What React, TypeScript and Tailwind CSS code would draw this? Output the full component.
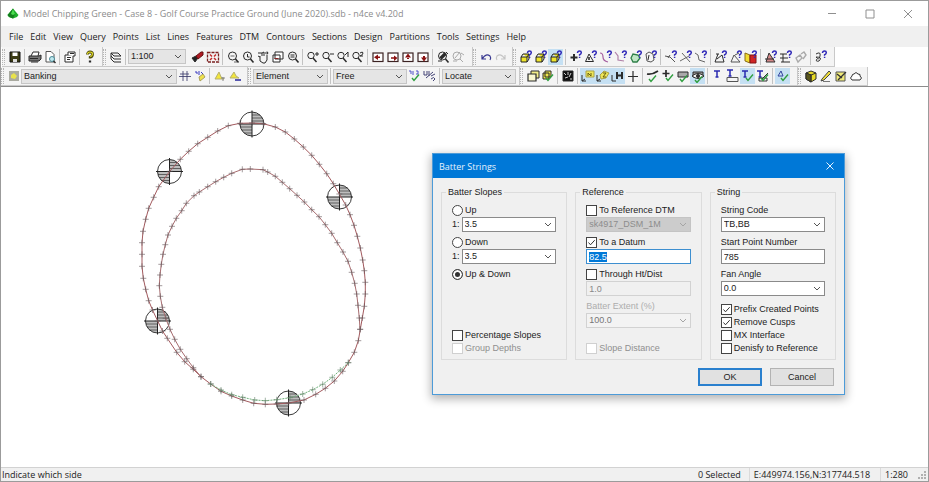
import { useEffect, useRef } from 'react';
import type { ReactNode } from 'react';
import { clsx } from 'clsx';

const MENU = [
  'File', 'Edit', 'View', 'Query', 'Points', 'List', 'Lines', 'Features', 'DTM', 'Contours',
  'Sections', 'Design', 'Partitions', 'Tools', 'Settings', 'Help',
];

type Point = [number, number];

const OUTER: Point[] = [
  [252, 123], [240, 123.3], [228.3, 125.7], [217.7, 131], [207.7, 137.3], [197.7, 143.7], [188.7, 151.3],
  [180.3, 159.3], [169.7, 171.3], [158.7, 186.7], [153.7, 197.3], [148.7, 208.3], [145.7, 219.3], [143, 231.3],
  [142, 242.7], [142, 254.3], [142, 266.3], [143.3, 278.3], [145.7, 289.3], [148.7, 300.7], [152.5, 310],
  [157.7, 321], [162.5, 331], [167.3, 338.3], [176.7, 352.3], [184.7, 361.7], [193.3, 369.3], [201, 376.7],
  [210.7, 384], [221, 391.3], [231.7, 396], [242.7, 400], [253.7, 403.3], [265.3, 404.3], [276.7, 404],
  [288.7, 403], [304, 400], [315.7, 394.3], [325.3, 388.3], [334.3, 381], [342.7, 371.3], [348.3, 362.7],
  [354.3, 352.3], [358.3, 340.7], [360.3, 329.3], [362.3, 318], [364.3, 306.3], [365.3, 294], [365.3, 282.3],
  [364.3, 270.7], [362.7, 260], [360.3, 248], [357.3, 236.3], [354, 225.3], [350, 214.7], [345.7, 205],
  [339.3, 194], [333.3, 183.7], [326.7, 173.7], [319.3, 164.3], [311.7, 155.3], [303.3, 147], [294.3, 139],
  [285.3, 132], [275.3, 127], [263.3, 123.7],
];

const INNER: Point[] = [
  [201, 376.7], [193.3, 367.7], [186.7, 358.7], [180.3, 349.3], [174.7, 339.3], [170, 329.3], [165.7, 318.3],
  [162.3, 307.3], [160.3, 296.3], [159.3, 285.7], [160, 275], [161.3, 264.3], [163, 254.3], [165.3, 244.7],
  [168, 235], [172, 226.3], [176.3, 218.3], [181.7, 210.7], [186.3, 203.3], [194, 195.7], [199.3, 192],
  [207.7, 186.7], [215.7, 181.7], [223.7, 177.3], [231.7, 173.3], [242.3, 169.3], [250.3, 169], [263, 169.7],
  [267.7, 172], [275.3, 176.3], [282.3, 182.3], [289.7, 188.7], [297, 195.3], [304.3, 202], [311.7, 209.7],
  [319, 216.7], [325.3, 224.7], [331.7, 233.3], [337.3, 242.7], [343, 252], [348, 261.3], [351.7, 272.3],
  [354.7, 283.3], [356.7, 294], [358, 305.3], [359.3, 318], [360, 329.3],
];

const FILL: Point[] = [
  [210.7, 384], [221, 390], [231.7, 394.7], [242.7, 397.3], [254.7, 400], [265.3, 400.7], [276.7, 399.7],
  [290, 397.7], [302.7, 394], [312.7, 389.7], [322.7, 384.3], [332.3, 377.3], [340.3, 370], [348.3, 362.7],
];

const STATIONS: Point[] = [[252, 124], [169.5, 171.5], [339.5, 197], [157.5, 321], [288.5, 403]];

const poly = (pts: Point[]) => pts.map((p) => p.join(',')).join(' ');
const ticks = (pts: Point[]) => pts.map(([x, y]) => `M${x - 3} ${y}h6M${x} ${y - 3}v6`).join('');

function Plan() {
  return (
    <svg viewBox="1 87 400 379" className="h-[379px] w-[400px] shrink-0" role="img" aria-label="Plan view">
      {STATIONS.map(([x, y]) => (
        <g key={x} transform={`translate(${x} ${y})`} stroke="#222" fill="none">
          <path d="M0 0V-12A12 12 0 0 1 12 0ZM0 0V12A12 12 0 0 1 -12 0Z" fill="#bdbdbd" stroke="none" />
          <circle r="12" strokeWidth=".9" />
          <path d="M-13.500 0H13.500M0 -13.500V13.500" strokeWidth="1" />
          <path d="M0 -3H11.500M0 -6H10.500M0 -9H8M0 3H-11.500M0 6H-10.500M0 9H-8" strokeWidth=".6" />
        </g>
      ))}
      <g fill="none" strokeWidth="1">
        <polygon points={poly(OUTER)} stroke="#a35a5e" />
        <polyline points={poly(INNER)} stroke="#a86d70" />
        <polyline points={poly(FILL)} stroke="#6fb07a" strokeDasharray="2 1" />
        <path d={ticks(OUTER) + ticks(INNER)} stroke="#66585a" strokeWidth=".6" />
        <path d={ticks(FILL)} stroke="#5f7f64" strokeWidth=".6" />
      </g>
    </svg>
  );
}

/* ---------- toolbar icons, all on a 14 x 14 grid ---------- */

const Q = () => <path d="M8.500 3q.2-2 2-2t1.800 1.600-1.700 2.200v.9m0 1v1.200" stroke="#3029b8" strokeWidth="1.500" />;
const Tick = ({ x = 0, y = 0 }) => (
  <path d={`M${5 + x} ${9 + y}l2 2.500 5-6`} stroke="#2f9e3f" strokeWidth="1.400" />
);
const Lens = ({ children }: { children?: ReactNode }) => (
  <>
    <circle cx="6.500" cy="6" r="4" />
    <path d="M9.500 9l3 3.500" strokeWidth="1.600" />
    {children}
  </>
);
const SmallLens = ({ children }: { children?: ReactNode }) => (
  <>
    <circle cx="5" cy="5.500" r="3.200" />
    <path d="M7 8l3.500 4" strokeWidth="1.500" />
    {children}
  </>
);
const Frame = ({ d }: { d: string }) => (
  <>
    <rect x="2" y="3" width="10" height="8.500" stroke="#3b2222" fill="#fff" strokeWidth="1.200" />
    <path d={d} fill="#8b1111" stroke="none" />
  </>
);
const Cube = () => (
  <>
    <path d="M2 7h6v5H2zM4 4h6v5" fill="#efe52c" stroke="#222" />
    <path d="M2 7l2-3M8 7l2-3M8 12l2-3" stroke="#222" />
    <Q />
  </>
);
const Letter = ({ x, y, c = '#2a2ab0' }: { x: number; y: number; c?: string }) => (
  <path d={`M${x} ${y}h6M${x + 3} ${y}v6M${x + 1.5} ${y + 6}h3`} stroke={c} strokeWidth="1.500" />
);

const ICONS: Record<string, ReactNode> = {
  'Save': <><path d="M2 2h10v10H2z" fill="#3b3b14" stroke="#111" /><path d="M4.500 2.500h5v3.500h-5z" fill="#fff" stroke="none" /><path d="M5 9h4v3H5z" fill="#ddd" stroke="none" /></>,
  'Print': <><path d="M3 6l2-4h6l-1 4" fill="#fff" /><path d="M1 6h10l2-1v4l-2 2H1z" fill="#777" /><path d="M2 8.500h8M3 12h7" /></>,
  'Print preview': <><path d="M3 1.500h5l3 3V12H3z" fill="#fff" stroke="#555" /><circle cx="9" cy="9" r="2.500" fill="#bfe8ee" stroke="#4a8a96" /><path d="M10.500 11l2 2" strokeWidth="1.500" /></>,
  'Properties': <><path d="M2 5h8v7H2z" fill="#fff" /><path d="M5 5V2h7v4h-2" fill="#fff" /><path d="M4 7.500h4M4 9.500h3M7 3.500h4" strokeWidth="1.200" /></>,
  'Help': <><path d="M4.500 4.500q0-2.500 2.500-2.500t2.500 2.200-2.300 3v1.300" stroke="#4b4a10" strokeWidth="2.800" /><path d="M4.500 4.300q0-2.300 2.500-2.300t2.400 2-2.100 2.800" stroke="#e8df28" strokeWidth="1.200" /><path d="M7 10.500v2" strokeWidth="2.300" /></>,
  'Layers': <><path d="M2 3h7l3 3H5zM2 6l3 3h7M2 9l3 3h7M2 3v6" fill="none" /></>,
  'Redraw': <><path d="M1 8l4-2 2 2-3 4z" fill="#222" /><path d="M5 6l5-4h2v3L7 9z" fill="#b11a24" stroke="#611" /></>,
  'Extents': <><rect x="1.500" y="2.500" width="11" height="9.500" stroke="#7b2020" strokeDasharray="3 1" strokeWidth="1.300" /><path d="M4 4.500l2 2M10 4.500l-2 2M4 10l2-2M10 10l-2-2" stroke="#c22b2b" strokeWidth="1.500" /></>,
  'Zoom window': <Lens><path d="M4.500 6h4M8 12h3" strokeWidth=".7" /></Lens>,
  'Zoom real time': <Lens><path d="M6.500 4v3h2" /></Lens>,
  'Pan': <><path d="M4 6v5l3 2h2l2-3V5M4 7L2 6M6 6V3l2-1v4M2 3h4M9 3h3l-1-1.500M12 3l-1 1.500" /></>,
  'Zoom sheet': <><path d="M4 2h8v7H4zM2 5h7v7H2z" fill="#fff" /><path d="M3.500 8.500h4" stroke="#822" /></>,
  'Zoom scale': <Lens><path d="M4.500 5h4M4.500 7h4" /></Lens>,
  'Zoom in': <SmallLens><path d="M9 4h4M11 2v4" /></SmallLens>,
  'Zoom out': <SmallLens><path d="M9 4h4" /></SmallLens>,
  'Zoom all': <SmallLens><path d="M9 5l3-3v5" /></SmallLens>,
  'Zoom last': <SmallLens><path d="M9 3q3-2 3 0t-3 3h3" /></SmallLens>,
  'Pan left': <Frame d="M3 7.300L7 4.500v5.500zM7 6.500h2v1.600H7z" />,
  'Pan right': <Frame d="M11.500 8L8 5.500v5.500zM5 7.200h3v1.600H5z" />,
  'Pan up': <Frame d="M7 3.500L4 7.500h6zM6 7h2v2H6z" />,
  'Pan down': <Frame d="M8 11.500L5 7.500h6zM7 6h2v2H7z" />,
  'Find': <><Lens><path d="M4 8l5-5M5 9l5-5" strokeWidth="1.800" /></Lens><path d="M10 2l2 2M2 11h4" /></>,
  'Find next': <g stroke="#aaa"><circle cx="6" cy="6" r="4" /><path d="M9 9l3 3M4 8l5-6M10 3l3 2M2 11h4" /></g>,
  'Undo': <path d="M3 5v4h4M3.500 8.500Q7 3 11 6q1.500 2 0 4" stroke="#35358f" strokeWidth="1.200" />,
  'Redo': <path d="M11 5v4H7M10.500 8.500Q7 3 3 6q-1.500 2 0 4" stroke="#c4c4c4" strokeWidth="1.200" />,
  'Query model': <Cube />,
  'Query layer': <Cube />,
  'Query object': <Cube />,
  'Query point': <><path d="M5 4v7M1.500 7.500h7" strokeWidth="2" /><Q /></>,
  'Query station': <><path d="M5 4L1.500 11.500h8z" /><path d="M5 7v3" strokeWidth="1.600" /><Q /></>,
  'Query line': <><path d="M1 3q3 0 3 4t5 5" stroke="#a55fa0" strokeWidth="1.200" /><Q /></>,
  'Query string': <><path d="M1 2l3 4v4l6 1" stroke="#b080a8" strokeWidth="1.200" /><Q /></>,
  'Query area': <><path d="M2 8l2-4 5 1 2 3-3 4H4z" fill="#bfe6c5" stroke="#2f7f48" strokeWidth="1.300" /><Q /></>,
  'Query text': <><path d="M2 4l3-2 4 2 1 6-3 2-4-1z" stroke="#555" /><path d="M5 5l-1 5" /><Q /></>,
  'Query angle': <><path d="M1 6l5 1 5 5M4 8l2-3" stroke="#555" /><Q /></>,
  'Query crossing': <><path d="M1 11l9-5M3 3l8 9" stroke="#666" /><Q /></>,
  'Query offset': <><path d="M1 3l3 2 1 5 6 2" stroke="#666" /><Q /></>,
  'Query triangle': <><path d="M2 4h3M4 4l-3 8h9L8 5M3 9l5-4" /><Q /></>,
  'Query slope': <><path d="M2 12l3-7 6 7zM6 5l4-2" stroke="#555" /><Q /></>,
  'Query volume': <><path d="M1 3l5 2v8l-5-2z" fill="#f2dd30" stroke="#8a6d18" /><path d="M6 5h6v8H6z" fill="#d02424" stroke="#801515" /><Q /></>,
  'Query section': <><path d="M2 12l3-9 6 9z" fill="#d78a8a" stroke="#333" /><path d="M1 9h9" /><Q /></>,
  'Query levels': <><path d="M1 4h7M1 8h8M2 12h9M4 4v8" /><Q /></>,
  'Query link': <g stroke="#aaa" strokeWidth="1.400"><path d="M2 8l4-3 2 3-4 4zM7 4l3-2 2 3-3 4" /></g>,
  'Query angle of view': <><path d="M2 4q5-3 4 2t-4 1q7 0 3 4-4 1-2-2" stroke="#333" /><Q /></>,
  'Feature': <><path d="M2 2h10v10H2z" fill="#a9aaa0" stroke="none" /><path d="M4 6l3-2 3 3-2 3-4-1z" fill="#e8e24c" stroke="none" /></>,
  'Add point': <path d="M1 7.500h12M5 2v10M9 2v10M2 5h9" stroke="#333366" strokeWidth=".8" />,
  'Edit feature': <><path d="M2 3h2v2M6 2v4M8 3l2 2" stroke="#3939c0" /><path d="M6 8l4-3 2 3-5 4z" fill="#f0e34b" stroke="#aaa05a" /></>,
  'Feature up': <><path d="M2 10l4-7 2 5 3 2z" fill="#f3e63b" stroke="#b5b070" /><path d="M8 9h4M10 8v4" stroke="#888" /></>,
  'Feature down': <><path d="M2 9l4-6 2 4 3 2z" fill="#f3e63b" stroke="#b5b070" /><path d="M7 11h6" stroke="#3030a0" strokeWidth="1.600" /></>,
  'Snap test': <><path d="M1 2h2v3M5 2v4M8 2h2v3H8" stroke="#5050c8" /><Tick x={-1} /></>,
  'Snap percent': <><path d="M1 2v4h3V2M6 2v5M3 9l7-6M8 7l4-2M8 10q3-3 4 0l-2 2" stroke="#444477" /></>,
  'Copy': <><path d="M5 2h8v7H5z" fill="#f5f08a" /><path d="M2 5h8v7H2z" fill="#fbf9d0" strokeWidth="1.200" /></>,
  'Copy accept': <><path d="M4 2h6v6H4zM2 4h6v6H2z" fill="#ece54a" /><Tick /></>,
  'Camera': <><path d="M2 2h10v10H2z" fill="#111" /><path d="M3 4l2 2M7 3v3M10 4l-2 4M4 9l3-1M9 10h2" stroke="#fff" strokeWidth=".8" /></>,
  'Point numbers': <><path d="M1 6v6h4M1 12l3-2" /><path d="M5 2h8v6H5z" fill="#eee659" stroke="#aaa34a" /><path d="M7 7V4l3 3V4" stroke="#665f10" /></>,
  'Point levels': <><path d="M1 6v6h4M1 12l3-2" /><path d="M4 6l4-4 5 2-3 5-5 1z" fill="#eee659" stroke="#aaa34a" /><path d="M7 4h3L7 8h3" stroke="#665f10" /></>,
  'Point heights': <><path d="M1 6v6h4" /><path d="M6 3v7M11 3v7M6 6.500h5" strokeWidth="2" /></>,
  'Point marks': <path d="M7 2v11M2 7.500h10" strokeWidth="1.200" />,
  'Accept line': <><path d="M1 5q5 1 11-3" strokeWidth="1.700" /><Tick x={-2} y={1} /></>,
  'Accept point': <><path d="M5 1v7M1.500 4.500h7" strokeWidth="1.700" /><Tick /></>,
  'Accept surface': <><path d="M2 3h10v5H2z" fill="#aaa" /><Tick x={-1} y={1} /></>,
  'Accept view': <><path d="M2 3h10v5H2z" fill="#999" /><path d="M1 7q6-5 12 0-6 5-12 0" fill="#f1f1f1" /><circle cx="7" cy="7" r="1.500" fill="#333" /><Tick x={-1} y={2} /></>,
  'Text': <Letter x={3} y={2} />,
  'Text box': <><Letter x={1} y={1} /><path d="M1 8.500h11v4H1z" stroke="#555" /></>,
  'Text accept': <><Letter x={1} y={2} /><Tick /></>,
  'Text edit': <><Letter x={1} y={2} /><path d="M3 9h8v3H3zM6 10l6-6" stroke="#333" /><Tick /></>,
  'Angle accept': <><path d="M2 7l3-5 2 5z" stroke="#3344a0" /><Tick /></>,
  'Solid': <><path d="M2 4l5-2 5 2v6l-5 3-5-3z" fill="#e6d927" /><path d="M2 4l5 2 5-2M7 6v7" /><path d="M2 4l5 2v7l-5-3z" fill="#59551a" /></>,
  'Pencil': <><path d="M3 10l7-8 2 2-7 7-3 1z" fill="#f0df3c" stroke="#444" /><path d="M4 12.500h7" stroke="#777" /></>,
  'Edit region': <><path d="M2 3h9v9H2z" fill="#f0ea7a" stroke="#555" /><path d="M4 11l8-8M3 5l5 4" stroke="#333" strokeWidth="1.300" /></>,
  'Cloud': <path d="M3 11q-3-2 0-4 0-2 2-2 2-3 4 0 3 0 2 2 3 2 0 4z" fill="#fff" stroke="#333" />,
};

function Tool({ name, active }: { name: string; active?: boolean }) {
  return (
    <button
      type="button"
      title={name}
      aria-label={name}
      aria-pressed={active}
      className={clsx('grid h-4 w-[15px] shrink-0 place-items-center', active && 'bg-[#c5e0f3]')}
    >
      <svg viewBox="0 0 14 14" className="h-3.5 w-3.5" fill="none" stroke="#2b2b2b" strokeWidth="1">
        {ICONS[name]}
      </svg>
    </button>
  );
}

const Sep = () => <span className="mx-0.5 h-4 w-px shrink-0 bg-[#c3c3c3]" />;

// "*" in front of a name marks a pressed button
function Tools({ names }: { names: string[] }) {
  return names.map((n, i) =>
    n === '|' ? <Sep key={i} /> : <Tool key={i} name={n.replace('*', '')} active={n.startsWith('*')} />,
  );
}

function Band({ children, className }: { children: ReactNode; className?: string }) {
  return (
    <div className={clsx('flex items-center border-r border-b border-[#c9c9c9] bg-[#f4f4f4]', className)}>
      <span className="mr-0.5 h-4 w-[3px] shrink-0 border-x border-dotted border-[#b5b5b5]" />
      {children}
    </div>
  );
}

type ComboProps = {
  id?: string;
  label?: string;
  value: string;
  disabled?: boolean;
  variant?: 'bar' | 'field' | 'gray';
  className?: string;
};

function Combo({ id, label, value, disabled, variant = 'field', className }: ComboProps) {
  return (
    <span className={clsx('relative block shrink-0', className)}>
      <select
        id={id}
        aria-label={label}
        defaultValue={value}
        disabled={disabled}
        className={clsx(
          'block h-[15px] w-full appearance-none border pl-0.5 text-[9px] leading-[13px] opacity-100 outline-none',
          variant === 'bar' && 'border-[#c6c6c6] bg-[#e5e5e5] text-[#222]',
          variant === 'gray' && 'border-[#c4c4c4] bg-[#cccccc] text-[#8d8d8d]',
          variant === 'field' && !disabled && 'border-[#8a8a8a] bg-white text-[#222]',
          variant === 'field' && disabled && 'border-[#d2d2d2] bg-[#f3f3f3] text-[#777]',
        )}
      >
        <option>{value}</option>
      </select>
      <svg
        viewBox="0 0 8 5"
        className="pointer-events-none absolute top-[5px] right-1 h-[5px] w-2"
        fill="none"
        stroke={disabled ? '#a5a5a5' : '#555'}
      >
        <path d="M1 1l3 3 3-3" />
      </svg>
    </span>
  );
}

function Check({ label, checked, disabled }: { label: string; checked?: boolean; disabled?: boolean }) {
  return (
    <label className={clsx('flex h-[13px] items-center gap-0.5 whitespace-nowrap', disabled && 'text-[#8f8f8f]')}>
      <span className="relative h-[11px] w-[11px]">
        <input
          type="checkbox"
          defaultChecked={checked}
          disabled={disabled}
          className="peer block h-full w-full appearance-none border border-[#444] bg-white disabled:border-[#d0d0d0]"
        />
        <svg
          viewBox="0 0 11 11"
          className="pointer-events-none absolute inset-0 hidden peer-checked:block"
          fill="none"
          stroke="#333"
        >
          <path d="M2.500 5.500l2 2.300 4.200-4.600" />
        </svg>
      </span>
      {label}
    </label>
  );
}

function Radio({ label, checked }: { label: string; checked?: boolean }) {
  return (
    <label className="flex h-[13px] items-center gap-0.5">
      <input
        type="radio"
        name="slope"
        defaultChecked={checked}
        className="h-[11px] w-[11px] appearance-none rounded-full border border-[#444] bg-white checked:bg-[#333] checked:shadow-[inset_0_0_0_2px_white]"
      />
      {label}
    </label>
  );
}

function TextField(props: { id?: string; label?: string; value: string; disabled?: boolean; selected?: boolean }) {
  const ref = useRef<HTMLInputElement>(null);
  useEffect(() => {
    if (props.selected) ref.current?.select();
  }, [props.selected]);
  return (
    <input
      ref={ref}
      id={props.id}
      aria-label={props.label}
      defaultValue={props.value}
      disabled={props.disabled}
      className={clsx(
        'block h-[15px] w-full border bg-white px-0.5 text-[9px] leading-[13px] outline-none selection:bg-[#0078d7] selection:text-white',
        props.selected ? 'border-[#3d8fd0]' : 'border-[#8a8a8a]',
        'disabled:border-[#d2d2d2] disabled:bg-[#f0f0f0] disabled:text-[#888]',
      )}
    />
  );
}

function Group({ title, children }: { title: string; children: ReactNode }) {
  return (
    <fieldset className="flex h-[173px] min-w-0 flex-1 flex-col border border-[#dcdcdc] px-2.5 pt-[7px] pb-1">
      <legend className="-ml-1.5 px-0.5 leading-[10px]">{title}</legend>
      {children}
    </fieldset>
  );
}

function BatterDialog() {
  return (
    <section
      role="dialog"
      aria-label="Batter Strings"
      className="absolute top-[66px] left-[431px] w-[413px] border border-[#4d9bd8] bg-[#f0f0f0] text-[9px] leading-[13px] text-[#222] shadow-[0_3px_9px_1px_rgba(0,0,0,0.3)]"
    >
      <header className="flex h-6 items-center justify-between bg-[#0078d7] px-1.5 font-['Open_Sans','Noto_Sans',sans-serif] text-[#e6f2fc]">
        <h2>Batter Strings</h2>
        <button type="button" aria-label="Close" className="grid h-4 w-4 place-items-center">
          <svg viewBox="0 0 8 8" className="h-2 w-2" fill="none" stroke="currentColor">
            <path d="M.5.5l7 7M7.500.5l-7 7" />
          </svg>
        </button>
      </header>

      <div className="flex gap-2 px-2 pt-[9px]">
        <Group title="Batter Slopes">
          <Radio label="Up" />
          <div className="mb-1 flex items-center gap-0.5">
            <label htmlFor="up">1:</label>
            <Combo id="up" value="3.5" className="w-[94px]" />
          </div>
          <Radio label="Down" />
          <div className="mb-1 flex items-center gap-0.5">
            <label htmlFor="down">1:</label>
            <Combo id="down" value="3.5" className="w-[94px]" />
          </div>
          <Radio label="Up & Down" checked />
          <div className="mt-auto">
            <Check label="Percentage Slopes" />
            <Check label="Group Depths" disabled />
          </div>
        </Group>

        <Group title="Reference">
          <div className="flex flex-1 flex-col">
            <Check label="To Reference DTM" />
            <Combo label="Reference DTM" value="sk4917_DSM_1M" variant="gray" disabled className="mb-1" />
            <Check label="To a Datum" checked />
            <div className="mb-1"><TextField label="Datum" value="82.5" selected /></div>
            <Check label="Through Ht/Dist" />
            <div className="mb-1"><TextField label="Ht/Dist" value="1.0" disabled /></div>
            <label htmlFor="extent" className="text-[#adadad]">Batter Extent (%)</label>
            <Combo id="extent" value="100.0" disabled />
            <div className="mt-auto"><Check label="Slope Distance" disabled /></div>
          </div>
        </Group>

        <Group title="String">
          <label htmlFor="code">String Code</label>
          <Combo id="code" value="TB,BB" className="mb-1" />
          <label htmlFor="start">Start Point Number</label>
          <div className="mb-1"><TextField id="start" value="785" /></div>
          <label htmlFor="fan">Fan Angle</label>
          <Combo id="fan" value="0.0" />
          <div className="mt-auto">
            <Check label="Prefix Created Points" checked />
            <Check label="Remove Cusps" checked />
            <Check label="MX Interface" />
            <Check label="Denisfy to Reference" />
          </div>
        </Group>
      </div>

      <footer className="flex justify-end gap-2 px-2.5 py-2">
        <button type="button" className="h-[18px] w-16 border-2 border-[#2a80ce] bg-[#e1e1e1] leading-[13px]">OK</button>
        <button type="button" className="h-[18px] w-16 border border-[#b3b3b3] bg-[#e1e1e1] leading-[13px]">Cancel</button>
      </footer>
    </section>
  );
}

export default function App() {
  return (
    <div className="flex h-screen flex-col overflow-hidden border border-[#9b9b9b] bg-white font-['Liberation_Sans',sans-serif] text-[9px] text-[#222]">
      <header className="flex h-[25px] shrink-0 items-center gap-1 pr-2.5 pl-1.5 font-['Open_Sans','Noto_Sans',sans-serif] text-[#8c8c8c]">
        <svg viewBox="0 0 12 12" className="h-3 w-3">
          <path d="M6 .5L11.500 7 10 9 6 10.500 2 9 .5 7z" fill="#1fae2b" />
          <path d="M6 .5L8 6l-2 4.500L2 9 .5 7z" fill="#14801e" />
          <path d="M6 1l2 5-2 1-2-1z" fill="#4ade4f" />
        </svg>
        <h1 className="flex-1">Model Chipping Green - Case 8 - Golf Course Practice Ground (June 2020).sdb - n4ce v4.20d</h1>
        <div className="flex gap-[22px]">
          {[['Minimise', 'M2 5.500h8'], ['Maximise', 'M2 2h8v8H2z'], ['Close', 'M2 2l8 8M10 2l-8 8']].map(([label, d]) => (
            <button key={label} type="button" aria-label={label} className="h-4 w-4">
              <svg viewBox="0 0 12 12" className="h-3 w-3" fill="none" stroke="#8f8f8f"><path d={d} /></svg>
            </button>
          ))}
        </div>
      </header>

      <nav className="flex h-[21px] shrink-0 items-center gap-[7px] bg-[#f0f0f0] pl-2 font-['Open_Sans','Noto_Sans',sans-serif]">
        {MENU.map((m) => (
          <button key={m} type="button">{m}</button>
        ))}
      </nav>

      <div className="flex h-5 shrink-0 pl-px">
        <Band className="w-[101px]">
          <Tools names={['Save', '|', 'Print', 'Print preview', '|', 'Properties', '|', 'Help']} />
        </Band>
        <Band className="w-[370px]">
          <Tools names={['Layers', '|']} />
          <Combo label="Scale" value="1:100" variant="bar" className="mr-1 w-[58px]" />
          <Tools
            names={[
              'Redraw', 'Extents', '|', 'Zoom window', 'Zoom real time', 'Pan', 'Zoom sheet', 'Zoom scale', '|',
              'Zoom in', 'Zoom out', 'Zoom all', 'Zoom last', '|', 'Pan left', 'Pan right', 'Pan up', 'Pan down', '|',
              'Find', 'Find next',
            ]}
          />
        </Band>
        <Band className="w-10">
          <Tools names={['Undo', 'Redo']} />
        </Band>
        <Band className="w-[322px]">
          <Tools
            names={[
              'Query model', 'Query layer', '*Query object', '|', 'Query point', 'Query station', 'Query line',
              'Query string', 'Query area', 'Query text', '|', 'Query angle', 'Query crossing', 'Query offset', '|',
              'Query triangle', 'Query slope', 'Query volume', '|', 'Query section', 'Query levels', 'Query link', '|',
              'Query angle of view',
            ]}
          />
        </Band>
      </div>

      <div className="flex h-[19px] shrink-0">
        <Band className="w-[247px]">
          <Tool name="Feature" />
          <Combo label="Feature" value="Banking" variant="bar" className="w-[156px]" />
          <Tools names={['Add point', 'Edit feature', '|', 'Feature up', 'Feature down']} />
        </Band>
        <Band className="w-[272px]">
          <Combo label="Snap" value="Element" variant="bar" className="w-[75px]" />
          <Sep />
          <Combo label="Mode" value="Free" variant="bar" className="w-[74px]" />
          <Tools names={['Snap test', 'Snap percent', '|']} />
          <Combo label="Action" value="Locate" variant="bar" className="w-[74px]" />
        </Band>
        <Band className="w-[278px]">
          <Tools
            names={[
              'Copy', 'Copy accept', '|', 'Camera', '|', '*Point numbers', '*Point levels', '*Point heights',
              'Point marks', '|', 'Accept line', 'Accept point', 'Accept surface', '*Accept view', '|', 'Text',
              'Text box', '*Text accept', 'Text edit', '|', '*Angle accept',
            ]}
          />
        </Band>
        <Band className="w-[70px]">
          <Tools names={['Solid', 'Pencil', 'Edit region', 'Cloud']} />
        </Band>
      </div>

      <main className="relative flex min-h-0 flex-1 border-t border-[#8c8c8c] bg-white">
        <Plan />
        <BatterDialog />
      </main>

      <footer className="flex h-[14px] shrink-0 items-center border-t border-[#d2d2d2] bg-[#f0f0f0] pr-0.5 pl-px font-['Open_Sans','Noto_Sans',sans-serif] leading-[13px]">
        <span className="flex-1">Indicate which side</span>
        <span className="border-r border-[#dadada] pr-2">0 Selected</span>
        <span className="border-r border-[#dadada] pr-2.5 pl-1">E:449974.156,N:317744.518</span>
        <span className="pr-2.5 pl-1">1:280</span>
        <svg viewBox="0 0 8 8" className="h-2 w-2" fill="#b0b0b0">
          <path d="M6 0h2v2H6zM3 3h2v2H3zM6 3h2v2H6zM0 6h2v2H0zM3 6h2v2H3zM6 6h2v2H6z" />
        </svg>
      </footer>
    </div>
  );
}
